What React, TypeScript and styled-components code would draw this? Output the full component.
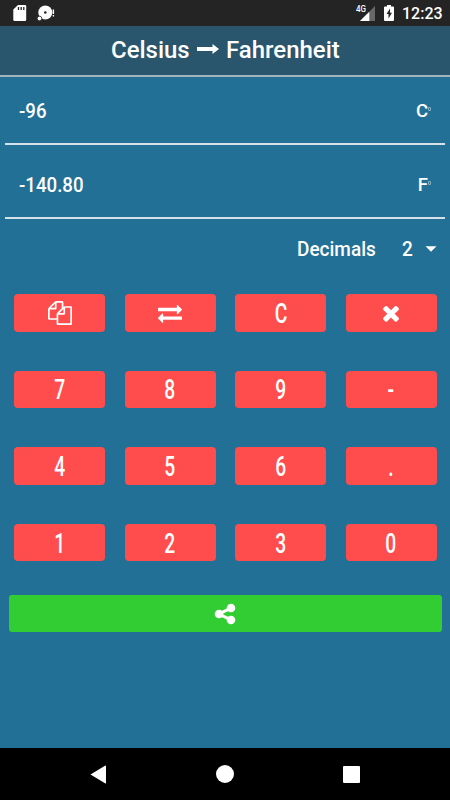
import React from "react";
import styled, { createGlobalStyle } from "styled-components";

const GlobalStyle = createGlobalStyle`
  *, *::before, *::after { box-sizing: border-box; }
  body { margin: 0; background: #227095; }
`;

const Screen = styled.div`
  width: 450px;
  height: 800px;
  display: flex;
  flex-direction: column;
  overflow: hidden;
  background: #227095;
  color: #fff;
  font-family: Roboto, sans-serif;
  font-weight: 500;
`;

const StatusBar = styled.div`
  height: 26px;
  flex: none;
  display: flex;
  align-items: center;
  justify-content: space-between;
  padding: 0 8px 0 12px;
  background: #242424;
`;

const StatusGroup = styled.div`
  display: flex;
  align-items: center;
`;

const Clock = styled.span`
  width: 40px;
  margin-left: 7px;
  font-size: 16px;
  line-height: 26px;
  padding-top: 2px;
  white-space: nowrap;
`;

const Header = styled.header`
  height: 51px;
  flex: none;
  display: flex;
  align-items: center;
  padding: 0 0 2px 111px;
  background: #2a566d;
  border-bottom: 2px solid #a3b3ba;
  font-size: 23.5px;
  line-height: 28px;
`;

const Squeeze = styled.span<{ $x: number; $origin?: string }>`
  display: inline-block;
  white-space: nowrap;
  transform: scaleX(${(p) => p.$x});
  transform-origin: ${(p) => p.$origin ?? "left"} center;
`;

const HeaderWord = styled.span<{ $width: number }>`
  width: ${(p) => p.$width}px;
`;

const Fields = styled.section`
  padding: 0 5px;
  flex: none;
`;

const Field = styled.div<{ $height: number }>`
  height: ${(p) => p.$height}px;
  display: flex;
  align-items: flex-end;
  justify-content: space-between;
  padding: 0 13px 20px 14px;
  border-bottom: 2px solid #d5e2ea;
  font-size: 20.5px;
  line-height: 24px;
`;

const Unit = styled.span`
  display: flex;
  align-items: center;
  font-size: 18.5px;
  line-height: 24px;
`;

const Degree = styled.span`
  width: 3px;
  height: 4px;
  margin: 0 1px 5px 0;
  border: 1px solid rgba(255, 255, 255, 0.45);
  border-radius: 1px;
`;

const DecimalsRow = styled.div`
  height: 60px;
  flex: none;
  display: flex;
  align-items: center;
  padding: 0 0 1px 297px;
  font-size: 20px;
  line-height: 24px;
`;

const DecimalsLabel = styled.span`
  width: 105px;
`;

const DecimalsValue = styled.span`
  width: 23px;
`;

const Keypad = styled.section`
  display: grid;
  flex: none;
  grid-template-columns: repeat(4, 91px);
  grid-auto-rows: 37.5px;
  column-gap: 19.5px;
  row-gap: 39.1px;
  padding: 15px 0 0 14px;
`;

const Key = styled.button`
  display: flex;
  align-items: center;
  justify-content: center;
  padding: 0;
  border: 0;
  border-radius: 4px;
  background: #ff4d4d;
  color: #fff;
  font: 500 27.5px/36px Roboto, sans-serif;
`;

const KeyLabel = styled(Squeeze)`
  padding-top: 2px;
`;

const ShareButton = styled.button`
  height: 37px;
  flex: none;
  display: flex;
  align-items: center;
  justify-content: center;
  margin: 34px 8.5px 0;
  padding: 0;
  border: 0;
  border-radius: 3px;
  background: #32cd32;
  color: #fff;
`;

const NavBar = styled.nav`
  height: 52px;
  flex: none;
  display: flex;
  align-items: center;
  justify-content: space-between;
  margin-top: auto;
  padding: 0 90px;
  background: #000;
`;

const Glyph = ({ d }: { d: string }) => (
  <svg width="24" height="24" viewBox="0 0 1792 1792" fill="currentColor">
    <path d={d} />
  </svg>
);

const icons = {
  copy: "M1696 384q40 0 68 28t28 68v1216q0 40-28 68t-68 28h-960q-40 0-68-28t-28-68v-288h-544q-40 0-68-28t-28-68v-672q0-40 20-88t48-76l408-408q28-28 76-48t88-20h416q40 0 68 28t28 68v328q68-40 128-40h416zm-544 213l-299 299h299v-299zm-640-384l-299 299h299v-299zm196 647l316-316v-416h-384v416q0 40-28 68t-68 28h-416v640h512v-256q0-40 20-88t48-76zm956 804v-1152h-384v416q0 40-28 68t-68 28h-416v640h896z",
  swap: "M1792 1184v192q0 13-9.5 22.5t-22.5 9.5h-1376v192q0 13-9.5 22.5t-22.5 9.5q-12 0-24-10l-319-320q-9-9-9-22 0-14 9-23l320-320q9-9 23-9 13 0 22.5 9.5t9.5 22.5v192h1376q13 0 22.5 9.5t9.5 22.5zm0-544q0 14-9 23l-320 320q-9 9-23 9-13 0-22.5-9.5t-9.5-22.5v-192h-1376q-13 0-22.5-9.5t-9.5-22.5v-192q0-13 9.5-22.5t22.5-9.5h1376v-192q0-14 9-23t23-9q12 0 24 10l319 319q9 9 9 23z",
  times: "M1490 1322q0 40-28 68l-136 136q-28 28-68 28t-68-28l-294-294-294 294q-28 28-68 28t-68-28l-136-136q-28-28-28-68t28-68l294-294-294-294q-28-28-28-68t28-68l136-136q28-28 68-28t68 28l294 294 294-294q28-28 68-28t68 28l136 136q28 28 28 68t-28 68l-294 294 294 294q28 28 28 68z",
  share: "M1344 1024q133 0 226.5 93.5t93.5 226.5-93.5 226.5-226.5 93.5-226.5-93.5-93.5-226.5q0-12 2-34l-360-180q-92 86-218 86-133 0-226.5-93.5t-93.5-226.5 93.5-226.5 226.5-93.5q126 0 218 86l360-180q-2-22-2-34 0-133 93.5-226.5t226.5-93.5 226.5 93.5 93.5 226.5-93.5 226.5-226.5 93.5q-126 0-218-86l-360 180q2 22 2 34t-2 34l360 180q92-86 218-86z",
};

const keys: { label: string; icon?: string }[] = [
  { label: "copy", icon: icons.copy },
  { label: "swap", icon: icons.swap },
  { label: "C" },
  { label: "delete", icon: icons.times },
  ..."789-456.1230".split("").map((label) => ({ label })),
];

export default function App() {
  return (
    <>
      <GlobalStyle />
      <Screen>
        <StatusBar>
          <StatusGroup>
            <svg width="44" height="26" fill="#fff">
              <path d="M6 5h7q1.2 0 1.2 1.2v13.6q0 1.2-1.2 1.2h-10.5q-1.2 0-1.2-1.2v-10.2z" />
              <path d="M6.5 7v3M9.2 7v3M11.8 7v3" stroke="#242424" strokeWidth="1.3" />
              <circle cx="33.3" cy="12.5" r="7" />
              <circle cx="33.3" cy="12.5" r="1.3" fill="#242424" />
              <circle cx="27.5" cy="18.5" r="2.3" stroke="#242424" strokeWidth="0.8" />
              <path d="M40.7 9.5h1.4v4.5h-1.4zM40.7 15h1.4v1.6h-1.4z" />
            </svg>
          </StatusGroup>
          <StatusGroup>
            <svg width="40" height="26" fill="#fff">
              <path d="M20 6v15h-15z" fill="#686868" />
              <path d="M14.3 11.7v9.3h-9.3z" />
              <text x="1" y="12" fontFamily="Roboto" fontWeight="500" fontSize="9.5" textLength="10" lengthAdjust="spacingAndGlyphs">4G</text>
              <path d="M32 5h4v1.5h2q1 0 1 1v12.5q0 1-1 1h-8q-1 0-1-1v-12.5q0-1 1-1h2z" />
              <path d="M35 8.5l-3.5 5.5h2v4.5l3.5-5.7h-2z" fill="#242424" />
            </svg>
            <Clock>12:23</Clock>
          </StatusGroup>
        </StatusBar>

        <Header>
          <HeaderWord $width={86}><Squeeze $x={1.02}>Celsius</Squeeze></HeaderWord>
          <svg width="29" height="14" fill="#fff">
            <path d="M0 4h15.500v-3l6.500 5-6.500 5v-3h-15.500z" />
          </svg>
          <HeaderWord $width={116}><Squeeze $x={1.02}>Fahrenheit</Squeeze></HeaderWord>
        </Header>

        <Fields>
          <Field $height={68}>
            <Squeeze $x={0.91}>-96</Squeeze>
            <Unit>C<Degree /></Unit>
          </Field>
          <Field $height={74}>
            <Squeeze $x={0.91}>-140.80</Squeeze>
            <Unit>F<Degree /></Unit>
          </Field>
        </Fields>

        <DecimalsRow>
          <DecimalsLabel><Squeeze $x={0.95}>Decimals</Squeeze></DecimalsLabel>
          <DecimalsValue><Squeeze $x={0.95}>2</Squeeze></DecimalsValue>
          <svg width="12" height="6" fill="#fff"><path d="M.5.3h11l-5.5 5.5z" /></svg>
        </DecimalsRow>

        <Keypad>
          {keys.map(({ label, icon }) => (
            <Key key={label} aria-label={label}>
              {icon ? <Glyph d={icon} /> : <KeyLabel $x={0.7} $origin="center">{label}</KeyLabel>}
            </Key>
          ))}
        </Keypad>

        <ShareButton aria-label="share"><Glyph d={icons.share} /></ShareButton>

        <NavBar>
          <svg width="17" height="19" fill="#fff"><path d="M.5 9.5L15 .7q1-.5 1 .5v16.6q0 1-1 .5z" /></svg>
          <svg width="18" height="18" fill="#fff"><circle cx="9" cy="9" r="9" /></svg>
          <svg width="17" height="17" fill="#fff"><rect width="17" height="17" rx="1" /></svg>
        </NavBar>
      </Screen>
    </>
  );
}
